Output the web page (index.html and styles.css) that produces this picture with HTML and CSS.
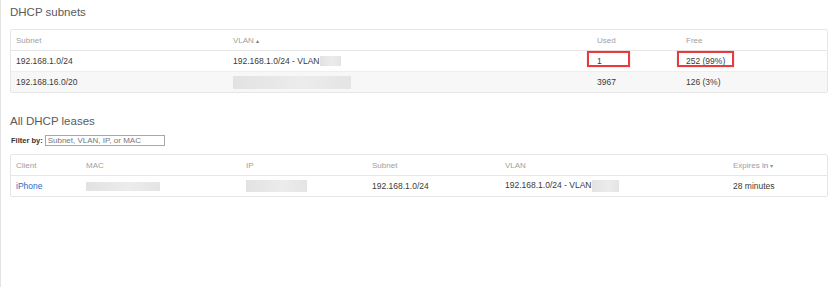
FILE: index.html
```html
<!DOCTYPE html>
<html>
<head>
    <title>DHCP</title>
    <link rel="stylesheet" href="styles.css">
</head>
<body>
    <div class="page">
        <h2>DHCP subnets</h2>
        <div class="panel">
            <table>
                <colgroup>
                    <col style="width:217px">
                    <col style="width:364px">
                    <col style="width:89px">
                    <col>
                </colgroup>
                <thead>
                    <tr>
                        <th>Subnet</th>
                        <th>VLAN <span class="sort">&#9652;</span></th>
                        <th>Used</th>
                        <th>Free</th>
                    </tr>
                </thead>
                <tbody>
                    <tr>
                        <td>192.168.1.0/24</td>
                        <td>192.168.1.0/24 - VLAN<span class="hidden small"></span></td>
                        <td><span class="mark used">1</span></td>
                        <td><span class="mark free">252 (99%)</span></td>
                    </tr>
                    <tr class="alt">
                        <td>192.168.16.0/20</td>
                        <td><span class="hidden wide"></span></td>
                        <td>3967</td>
                        <td>126 (3%)</td>
                    </tr>
                </tbody>
            </table>
        </div>

        <h2 class="second">All DHCP leases</h2>
        <div class="filter">
            <label>Filter by:</label>
            <input type="text" placeholder="Subnet, VLAN, IP, or MAC">
        </div>

        <div class="panel">
            <table>
                <colgroup>
                    <col style="width:70px">
                    <col style="width:160px">
                    <col style="width:126px">
                    <col style="width:133px">
                    <col style="width:228px">
                    <col>
                </colgroup>
                <thead>
                    <tr>
                        <th>Client</th>
                        <th>MAC</th>
                        <th>IP</th>
                        <th>Subnet</th>
                        <th>VLAN</th>
                        <th>Expires <a class="sortlink">in <span class="sort">&#9662;</span></a></th>
                    </tr>
                </thead>
                <tbody>
                    <tr>
                        <td><a href="#">iPhone</a></td>
                        <td><span class="hidden mac"></span></td>
                        <td><span class="hidden ip"></span></td>
                        <td>192.168.1.0/24</td>
                        <td>192.168.1.0/24 - VLAN<span class="hidden vlan"></span></td>
                        <td>28 minutes</td>
                    </tr>
                </tbody>
            </table>
        </div>
    </div>
</body>
</html>
```

FILE: styles.css
```css
body {
    margin: 0;
    font-family: "Liberation Sans", Arial, sans-serif;
    background: #fff;
}

.page {
    min-height: 287px;
    box-sizing: border-box;
    border-left: 1px solid #e4e4e4;
    padding: 0 4px 0 9px;
}

h2 {
    margin: 0 0 9px 0;
    padding-top: 4px;
    font-size: 11.5px;
    line-height: 16px;
    font-weight: normal;
    color: #5a5a5a;
}

h2.second {
    margin-top: 20px;
    padding-top: 0;
    margin-bottom: 6px;
}

.panel {
    border: 1px solid #e6e6e6;
    border-radius: 2px;
}

table {
    width: 100%;
    border-collapse: collapse;
    table-layout: fixed;
}

th, td {
    height: 20px;
    padding: 0 5px;
    text-align: left;
    white-space: nowrap;
    font-size: 8.5px;
    color: #3a3a3a;
}

th {
    font-weight: normal;
    font-size: 8px;
    color: #a0a0a0;
    border-bottom: 1px solid #e6e6e6;
}

tbody tr + tr td {
    border-top: 1px solid #eee;
}

tr.alt td {
    background: #f7f7f7;
}

.sort {
    font-size: 6px;
    color: #777;
}

.sortlink {
    color: #6f93c8;
}

.sortlink .sort {
    color: #6f93c8;
}

a {
    color: #2b6cc4;
    text-decoration: none;
}

/* masked values */
.hidden {
    display: inline-block;
    vertical-align: middle;
    background: linear-gradient(90deg, #e2e2e2, #ececec 60%, #e4e4e4);
    filter: blur(0.4px);
}

.hidden.small { width: 21px; height: 10px; margin-left: 1px; }
.hidden.wide { width: 118px; height: 13px; }
.hidden.mac { width: 74px; height: 9px; }
.hidden.ip { width: 61px; height: 12px; }
.hidden.vlan { width: 27px; height: 12px; margin-left: 1px; }

/* red callouts */
.mark {
    position: relative;
}

.mark::after {
    content: "";
    position: absolute;
    top: -5px;
    height: 12px;
    border: 2px solid #e63b3f;
    box-shadow: 0 0 1px rgba(230, 59, 63, 0.5);
}

.mark.used::after { left: -10px; width: 39px; }
.mark.free::after { left: -9px; width: 53px; }

.filter {
    display: flex;
    align-items: center;
    gap: 2px;
    margin-bottom: 8px;
    padding-left: 1px;
}

.filter label {
    font-size: 7.5px;
    font-weight: bold;
    color: #333;
}

.filter input {
    width: 120px;
    height: 11px;
    box-sizing: border-box;
    border: 1px solid #a9a9a9;
    padding: 0 2px;
    font-family: inherit;
    font-size: 8px;
    outline: none;
}

.filter input::placeholder {
    color: #777;
}
```
